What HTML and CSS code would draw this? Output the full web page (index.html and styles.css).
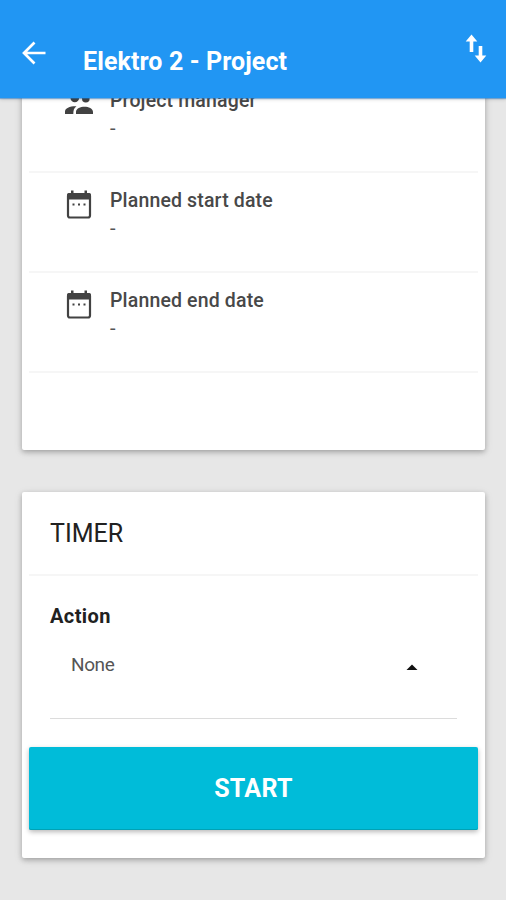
FILE: index.html
```html
<!DOCTYPE html>
<html lang="en">
<head>
<meta charset="utf-8">
<title>Elektro 2 - Project</title>
<link rel="stylesheet" href="styles.css">
</head>
<body>
<header class="bar">
  <svg class="back" viewBox="0 0 24 24" width="24" height="24"><path d="M23.500 12H2M12.500 1.500 2 12l10.500 10.500" fill="none" stroke="currentColor" stroke-width="2.700"/></svg>
  <h1 class="title"><span>Elektro 2 - Project</span></h1>
  <svg class="swap" viewBox="0 0 22 30" width="22" height="30"><path d="M6.500 .5 12.300 7.500H8.300V18H4.700V7.500H.7zM15.500 28.500 21.300 21.500H17.300V12H13.700V21.500H9.700z" fill="currentColor"/></svg>
</header>
<main class="content">
  <section class="card details">
    <div class="row">
      <svg class="icon" viewBox="0 0 28 30" width="28" height="30"><g fill="currentColor"><circle cx="9.800" cy="8" r="4.300"/><circle cx="20.800" cy="8.800" r="3.800"/><path d="M0 24v-2.500C0 18 5 16 11.500 16.200 9 18 8.300 20 8.300 24zM11 24v-2c0-3.500 4.500-5.300 8.500-5.300s8.500 1.800 8.500 5.300v2z"/></g></svg>
      <div class="info"><div class="label">Project manager</div><div class="value">-</div></div>
    </div>
    <div class="row">
      <svg class="icon" viewBox="0 0 28 30" width="28" height="30"><use href="#calendar"/></svg>
      <div class="info"><div class="label">Planned start date</div><div class="value">-</div></div>
    </div>
    <div class="row">
      <svg class="icon" viewBox="0 0 28 30" width="28" height="30"><g id="calendar"><rect x="3" y="4" width="22" height="23.500" rx="2" fill="none" stroke="currentColor" stroke-width="2.200"/><path d="M2 9.500V5a2 2 0 0 1 2-2h2V.5h2.500V3h11V.5H22V3h2a2 2 0 0 1 2 2v4.500z" fill="currentColor"/><path d="M7.500 13.500h2v2h-2zM13 13.500h2v2h-2zM18.500 13.500h2v2h-2z" fill="currentColor"/></g></svg>
      <div class="info"><div class="label">Planned end date</div><div class="value">-</div></div>
    </div>
  </section>
  <section class="card timer">
    <h2 class="heading"><span>TIMER</span></h2>
    <div class="form">
      <div class="field-label">Action</div>
      <div class="select"><span>None</span><svg viewBox="0 0 12 6" width="12" height="6"><path d="M.5 6 6 .5 11.500 6z" fill="currentColor"/></svg></div>
    </div>
    <button class="start">START</button>
  </section>
</main>
</body>
</html>
```
FILE: styles.css
```css
* { box-sizing: border-box; }
body {
  margin: 0;
  height: 900px;
  overflow: hidden;
  display: flex;
  flex-direction: column;
  background: #e7e7e7;
  color: #212121;
  font-family: Roboto, sans-serif;
}
.bar {
  position: relative;
  z-index: 1;
  flex: none;
  height: 98px;
  padding: 0 19px 0 22px;
  display: flex;
  align-items: flex-start;
  background: #2196f3;
  color: #fff;
  box-shadow: 0 1px 1px rgba(33, 120, 200, .5), 0 1px 4px rgba(0, 0, 0, .2);
}
.back { margin-top: 41px; }
.title {
  flex: 1;
  margin: 47px 0 0 37px;
  font-size: 25px;
  line-height: 30px;
  font-weight: 700;
  letter-spacing: .1px;
}
.swap { margin-top: 34px; }
.content {
  flex: 1;
  min-height: 0;
  overflow: hidden;
  padding: 0 21px 0 22px;
}
.card {
  background: #fff;
  border-radius: 2px;
  box-shadow: 0 2px 5px rgba(0, 0, 0, .24), 0 2px 10px rgba(0, 0, 0, .1);
}
.details {
  height: 377px;
  margin-top: -25px;
  padding: 0 7px;
}
.row {
  height: 100px;
  padding: 17px 0 0 36px;
  display: flex;
  align-items: flex-start;
  gap: 17px;
  border-bottom: 2px solid #f6f6f6;
}
.icon { color: #424242; }
.label {
  font-size: 19.5px;
  line-height: 22px;
  font-weight: 500;
  letter-spacing: .15px;
  color: #484848;
}
.value {
  margin-top: 5px;
  font-size: 20px;
  line-height: 22px;
  color: #555;
}
.timer {
  height: 366px;
  margin-top: 42px;
  padding: 0 7px;
}
.heading {
  height: 84px;
  margin: 0;
  padding: 27px 0 0 21px;
  border-bottom: 2px solid #f6f6f6;
  font-size: 25px;
  line-height: 30px;
  font-weight: 400;
}
.form {
  height: 143px;
  margin: 0 21px;
  padding-top: 29px;
  border-bottom: 1px solid #dcdcdc;
}
.field-label {
  font-size: 20px;
  line-height: 22px;
  font-weight: 700;
  letter-spacing: .4px;
}
.select {
  margin-top: 27px;
  padding: 0 39px 0 21px;
  display: flex;
  align-items: center;
  justify-content: space-between;
  font-size: 19px;
  line-height: 22px;
  letter-spacing: -.4px;
  color: #555;
}
.select svg { color: #111; margin-top: 4px; }
.start {
  display: block;
  width: 100%;
  height: 83px;
  margin: 28px 0 0;
  padding: 0;
  border: 0;
  border-radius: 2px;
  background: #00bcd9;
  color: #fff;
  font: 700 25px/30px Roboto, sans-serif;
  letter-spacing: .3px;
  box-shadow: inset 0 -1px 0 #00a2b5, 0 2px 5px rgba(0, 0, 0, .28);
}
```
